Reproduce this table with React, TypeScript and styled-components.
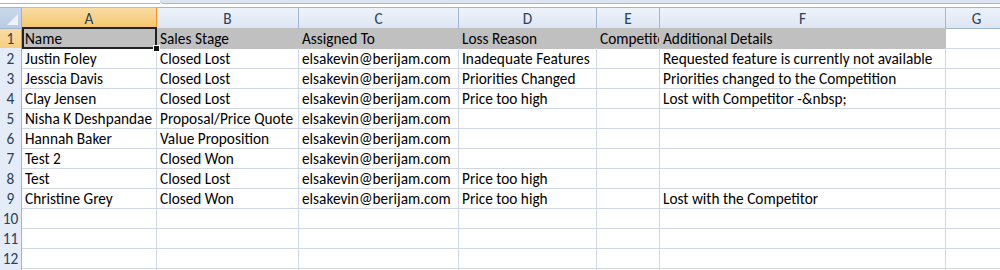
import React from "react";
import styled, { createGlobalStyle, css } from "styled-components";

const GlobalStyle = createGlobalStyle`
  html, body {
    margin: 0;
    padding: 0;
    background: #ffffff;
    overflow: hidden;
  }
  body {
    font-family: "Carlito", "Lato", "Open Sans", sans-serif;
  }
`;

const columns = [
  { key: "A", width: 135 },
  { key: "B", width: 142 },
  { key: "C", width: 160 },
  { key: "D", width: 138 },
  { key: "E", width: 63 },
  { key: "F", width: 286 },
  { key: "G", width: 62 },
  { key: "H", width: 130 },
];

const rows: string[][] = [
  ["Name", "Sales Stage", "Assigned To", "Loss Reason", "Competitor", "Additional Details"],
  ["Justin Foley", "Closed Lost", "elsakevin@berijam.com", "Inadequate Features", "", "Requested feature is currently not available"],
  ["Jesscia Davis", "Closed Lost", "elsakevin@berijam.com", "Priorities Changed", "", "Priorities changed to the Competition"],
  ["Clay Jensen", "Closed Lost", "elsakevin@berijam.com", "Price too high", "", "Lost with Competitor -&nbsp;"],
  ["Nisha K Deshpandae", "Proposal/Price Quote", "elsakevin@berijam.com"],
  ["Hannah Baker", "Value Proposition", "elsakevin@berijam.com"],
  ["Test 2", "Closed Won", "elsakevin@berijam.com"],
  ["Test", "Closed Lost", "elsakevin@berijam.com", "Price too high"],
  ["Christine Grey", "Closed Won", "elsakevin@berijam.com", "Price too high", "", "Lost with the Competitor"],
  [],
  [],
  [],
  [],
];

const gridTemplate = `22px ${columns.map((c) => `${c.width}px`).join(" ")}`;

const Sheet = styled.div`
  width: 1000px;
  height: 270px;
  overflow: hidden;
  font-size: 15.3px;
  color: #000;
`;

const FormulaEdge = styled.div`
  height: 7px;
  display: flex;
`;

const EdgeLeft = styled.div`
  width: 160px;
  height: 3px;
  border-bottom: 1px solid #a7b7cc;
`;

const EdgeRight = styled.div`
  flex: 1;
  height: 3px;
  background: #dbe4ef;
  border-bottom: 1px solid #a7b7cc;
  border-bottom-left-radius: 4px;
`;

const Row = styled.div`
  display: grid;
  grid-template-columns: ${gridTemplate};
  height: 20px;
`;

const HeaderRow = styled(Row)`
  height: 21px;
`;

const Corner = styled.div`
  position: relative;
  background: linear-gradient(#c9d8ec, #b9cce5);
  border-right: 1px solid #f0a53c;
  border-bottom: 1px solid #9eb6ce;
  border-top: 1px solid #9eb6ce;
  box-sizing: border-box;
  &::after {
    content: "";
    position: absolute;
    right: 3px;
    bottom: 3px;
    width: 0;
    height: 0;
    border-left: 11px solid transparent;
    border-bottom: 11px solid #eef3f9;
  }
`;

const ColHead = styled.div<{ $active?: boolean }>`
  box-sizing: border-box;
  display: flex;
  align-items: center;
  justify-content: center;
  padding-top: 1px;
  color: #2c4058;
  border-top: 1px solid #9eb6ce;
  border-right: 1px solid #9eb6ce;
  border-bottom: 1px solid #9eb6ce;
  background: linear-gradient(#eef3fa, #dce6f3);
  ${(p) =>
    p.$active &&
    css`
      background: linear-gradient(#f9dca4, #f4c66a);
      border-right-color: #f29436;
      border-bottom-color: #f29436;
      border-top-color: #e6b872;
    `}
`;

const RowHead = styled.div<{ $active?: boolean }>`
  box-sizing: border-box;
  display: flex;
  align-items: center;
  justify-content: center;
  padding-top: 1px;
  color: #2c4058;
  background: #e4ecf7;
  border-right: 1px solid #9eb6ce;
  border-bottom: 1px solid #c5d3e4;
  ${(p) =>
    p.$active &&
    css`
      background: linear-gradient(#f9dca4, #f6cf85);
      border-right-color: #f29436;
      border-bottom-color: #f0b660;
    `}
`;

const Cell = styled.div<{ $filled?: boolean }>`
  position: relative;
  box-sizing: border-box;
  padding: 1px 0 0 3px;
  line-height: 19px;
  white-space: nowrap;
  overflow: hidden;
  border-right: 1px solid #d0d7e5;
  border-bottom: 1px solid #d0d7e5;
  ${(p) =>
    p.$filled &&
    css`
      background: #c0c0c0;
      border-right-color: #c0c0c0;
      border-bottom-color: #c0c0c0;
    `}
`;

const ActiveCell = styled(Cell)`
  overflow: visible;
`;

const Selection = styled.div`
  position: absolute;
  top: -1px;
  left: 0;
  right: -1px;
  bottom: -1px;
  border: 2px solid #222;
  pointer-events: none;
`;

const FillHandle = styled.div`
  position: absolute;
  right: -4px;
  bottom: -4px;
  width: 5px;
  height: 5px;
  background: #111;
  border: 1px solid #fff;
  z-index: 2;
`;

const CellText = styled.span`
  display: block;
  overflow: hidden;
`;

export default function App() {
  return (
    <>
      <GlobalStyle />
      <Sheet>
        <FormulaEdge>
          <EdgeLeft />
          <EdgeRight />
        </FormulaEdge>
        <HeaderRow>
          <Corner />
          {columns.map((c) => (
            <ColHead key={c.key} $active={c.key === "A"}>
              {c.key}
            </ColHead>
          ))}
        </HeaderRow>
        {rows.map((row, r) => (
          <Row key={r}>
            <RowHead $active={r === 0}>{r + 1}</RowHead>
            {columns.map((c, ci) => {
              const filled = r === 0 && ci < 6;
              const text = row[ci] || "";
              if (r === 0 && ci === 0) {
                return (
                  <ActiveCell key={c.key} $filled>
                    <CellText>{text}</CellText>
                    <Selection />
                    <FillHandle />
                  </ActiveCell>
                );
              }
              return (
                <Cell key={c.key} $filled={filled}>
                  {text}
                </Cell>
              );
            })}
          </Row>
        ))}
      </Sheet>
    </>
  );
}
